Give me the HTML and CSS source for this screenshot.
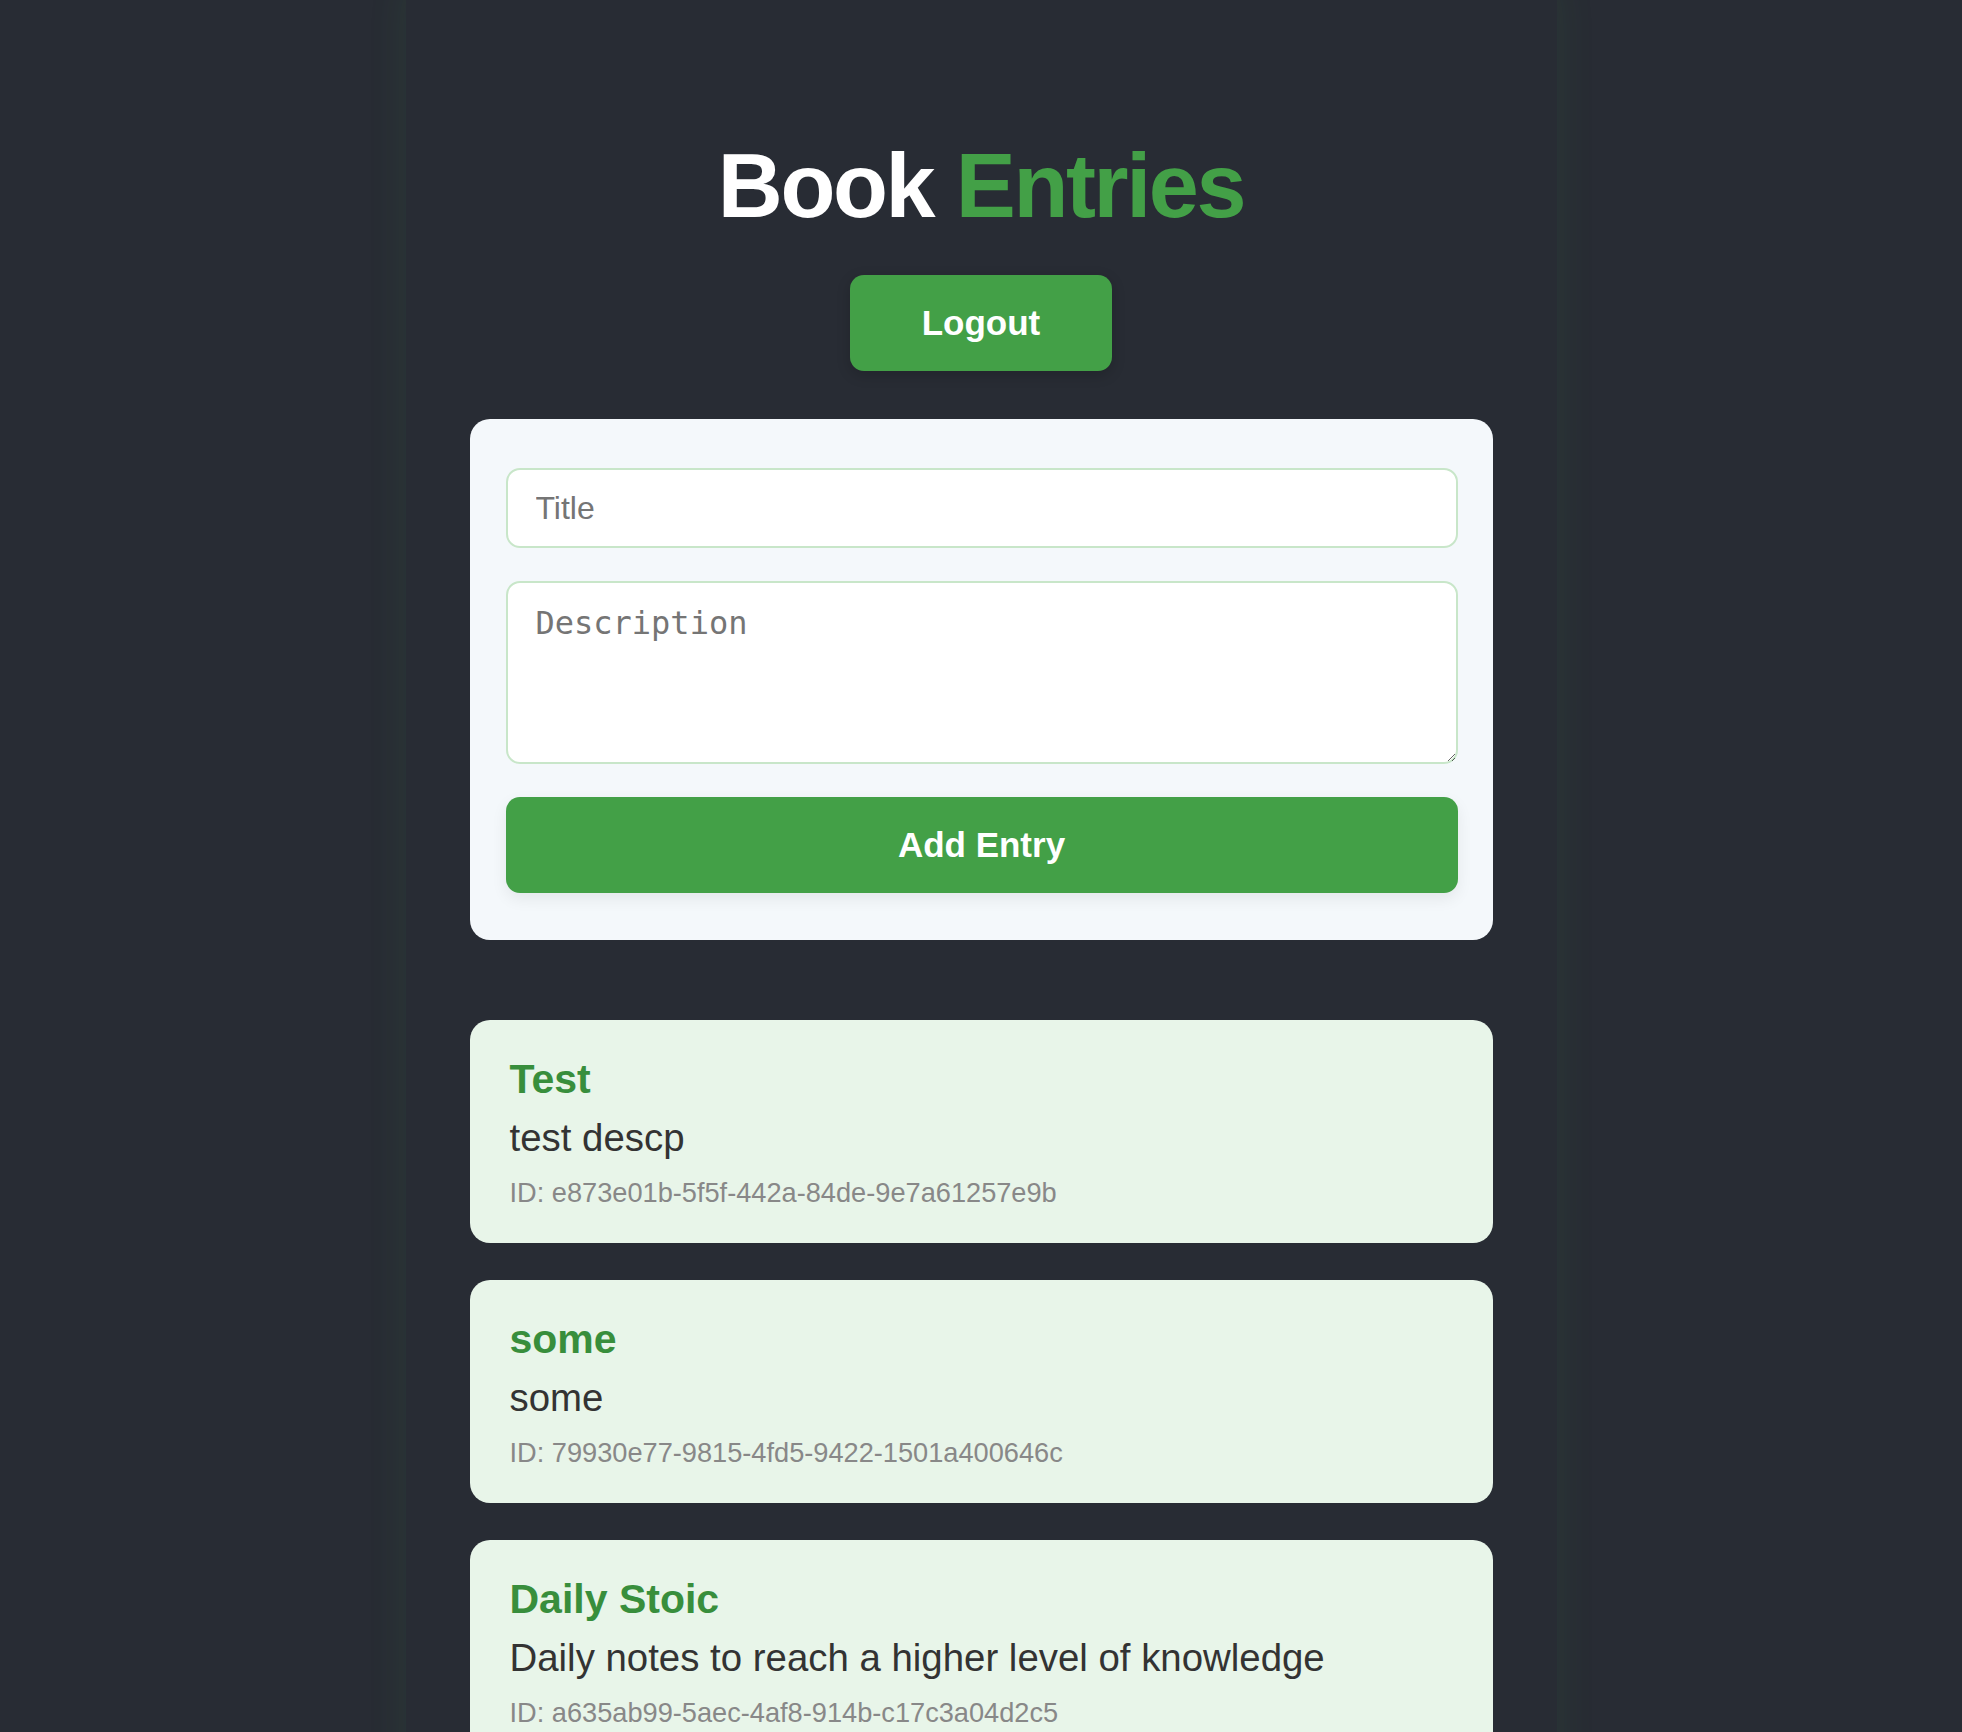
FILE: index.html
```html
<!DOCTYPE html>
<html>
<head>
  <title>Book Entries</title>
  <link rel="stylesheet" href="styles.css">
</head>
<body>
<div class="app">
  <h1 class="heading">Book <span class="accent">Entries</span></h1>

  <div class="actions">
    <button class="btn logout">Logout</button>
  </div>

  <form class="entry-form">
    <input type="text" class="field" placeholder="Title">
    <textarea class="field area" placeholder="Description"></textarea>
    <button type="button" class="btn add">Add Entry</button>
  </form>

  <div class="entries">
    <div class="entry">
      <h3 class="entry-title">Test</h3>
      <p class="entry-desc">test descp</p>
      <p class="entry-id">ID: e873e01b-5f5f-442a-84de-9e7a61257e9b</p>
    </div>
    <div class="entry">
      <h3 class="entry-title">some</h3>
      <p class="entry-desc">some</p>
      <p class="entry-id">ID: 79930e77-9815-4fd5-9422-1501a400646c</p>
    </div>
    <div class="entry">
      <h3 class="entry-title">Daily Stoic</h3>
      <p class="entry-desc">Daily notes to reach a higher level of knowledge</p>
      <p class="entry-id">ID: a635ab99-5aec-4af8-914b-c17c3a04d2c5</p>
    </div>
  </div>
</div>
</body>
</html>
```

FILE: styles.css
```css
body {
  margin: 0;
  background-color: #282c34;
  font-family: "Liberation Sans", Arial, sans-serif;
  overflow: hidden;
}

.app {
  width: 1151px;
  box-sizing: border-box;
  margin: -24px auto 0;
  padding: 159px 64px 80px;
  background-color: #282c34;
  border-radius: 24px;
  box-shadow: 0 0 40px rgba(76, 175, 80, 0.11);
}

.heading {
  margin: 0;
  text-align: center;
  font-size: 90px;
  line-height: 103px;
  letter-spacing: -2.4px;
  font-weight: bold;
  color: #ffffff;
}
.heading .accent { color: #43a047; }

.actions {
  display: flex;
  justify-content: center;
  margin-top: 37px;
}

.btn {
  border: none;
  background-color: #43a047;
  color: #ffffff;
  font-family: "Liberation Sans", Arial, sans-serif;
  font-size: 35px;
  font-weight: bold;
  line-height: 40px;
  padding: 28px 72px;
  border-radius: 14px;
  cursor: pointer;
}

.logout {
  box-shadow: 0 4px 14px rgba(0, 0, 0, 0.18);
}

.entry-form {
  display: flex;
  flex-direction: column;
  gap: 33px;
  margin: 48px 0 0;
  padding: 49px 35px 47px 36px;
  background-color: #f4f8fb;
  border-radius: 20px;
}

.field {
  display: block;
  box-sizing: border-box;
  width: 100%;
  margin: 0;
  padding: 18px 28px;
  border: 2px solid #c8e6c9;
  border-radius: 14px;
  background: #ffffff;
  font-family: "Liberation Sans", Arial, sans-serif;
  font-size: 32px;
  line-height: 40px;
  color: #333;
  outline: none;
}
.field::placeholder { color: #757575; }

.area {
  height: 183px;
  padding-top: 20px;
  font-family: "DejaVu Sans Mono", monospace;
}

.add {
  width: 100%;
  padding: 28px 0;
  box-shadow: 0 6px 16px rgba(0, 0, 0, 0.07);
}

.entries {
  display: flex;
  flex-direction: column;
  gap: 37px;
  margin-top: 80px;
}

.entry {
  padding: 35px 40px 34px;
  background-color: #e8f5e9;
  border-radius: 20px;
}

.entry-title {
  margin: 0;
  font-size: 41px;
  line-height: 48px;
  color: #388e3c;
}

.entry-desc {
  margin: 12px 0 0;
  font-size: 38.4px;
  line-height: 46px;
  color: #333333;
}

.entry-id {
  margin: 15px 0 0;
  font-size: 27.2px;
  line-height: 33px;
  color: #888888;
}
```
